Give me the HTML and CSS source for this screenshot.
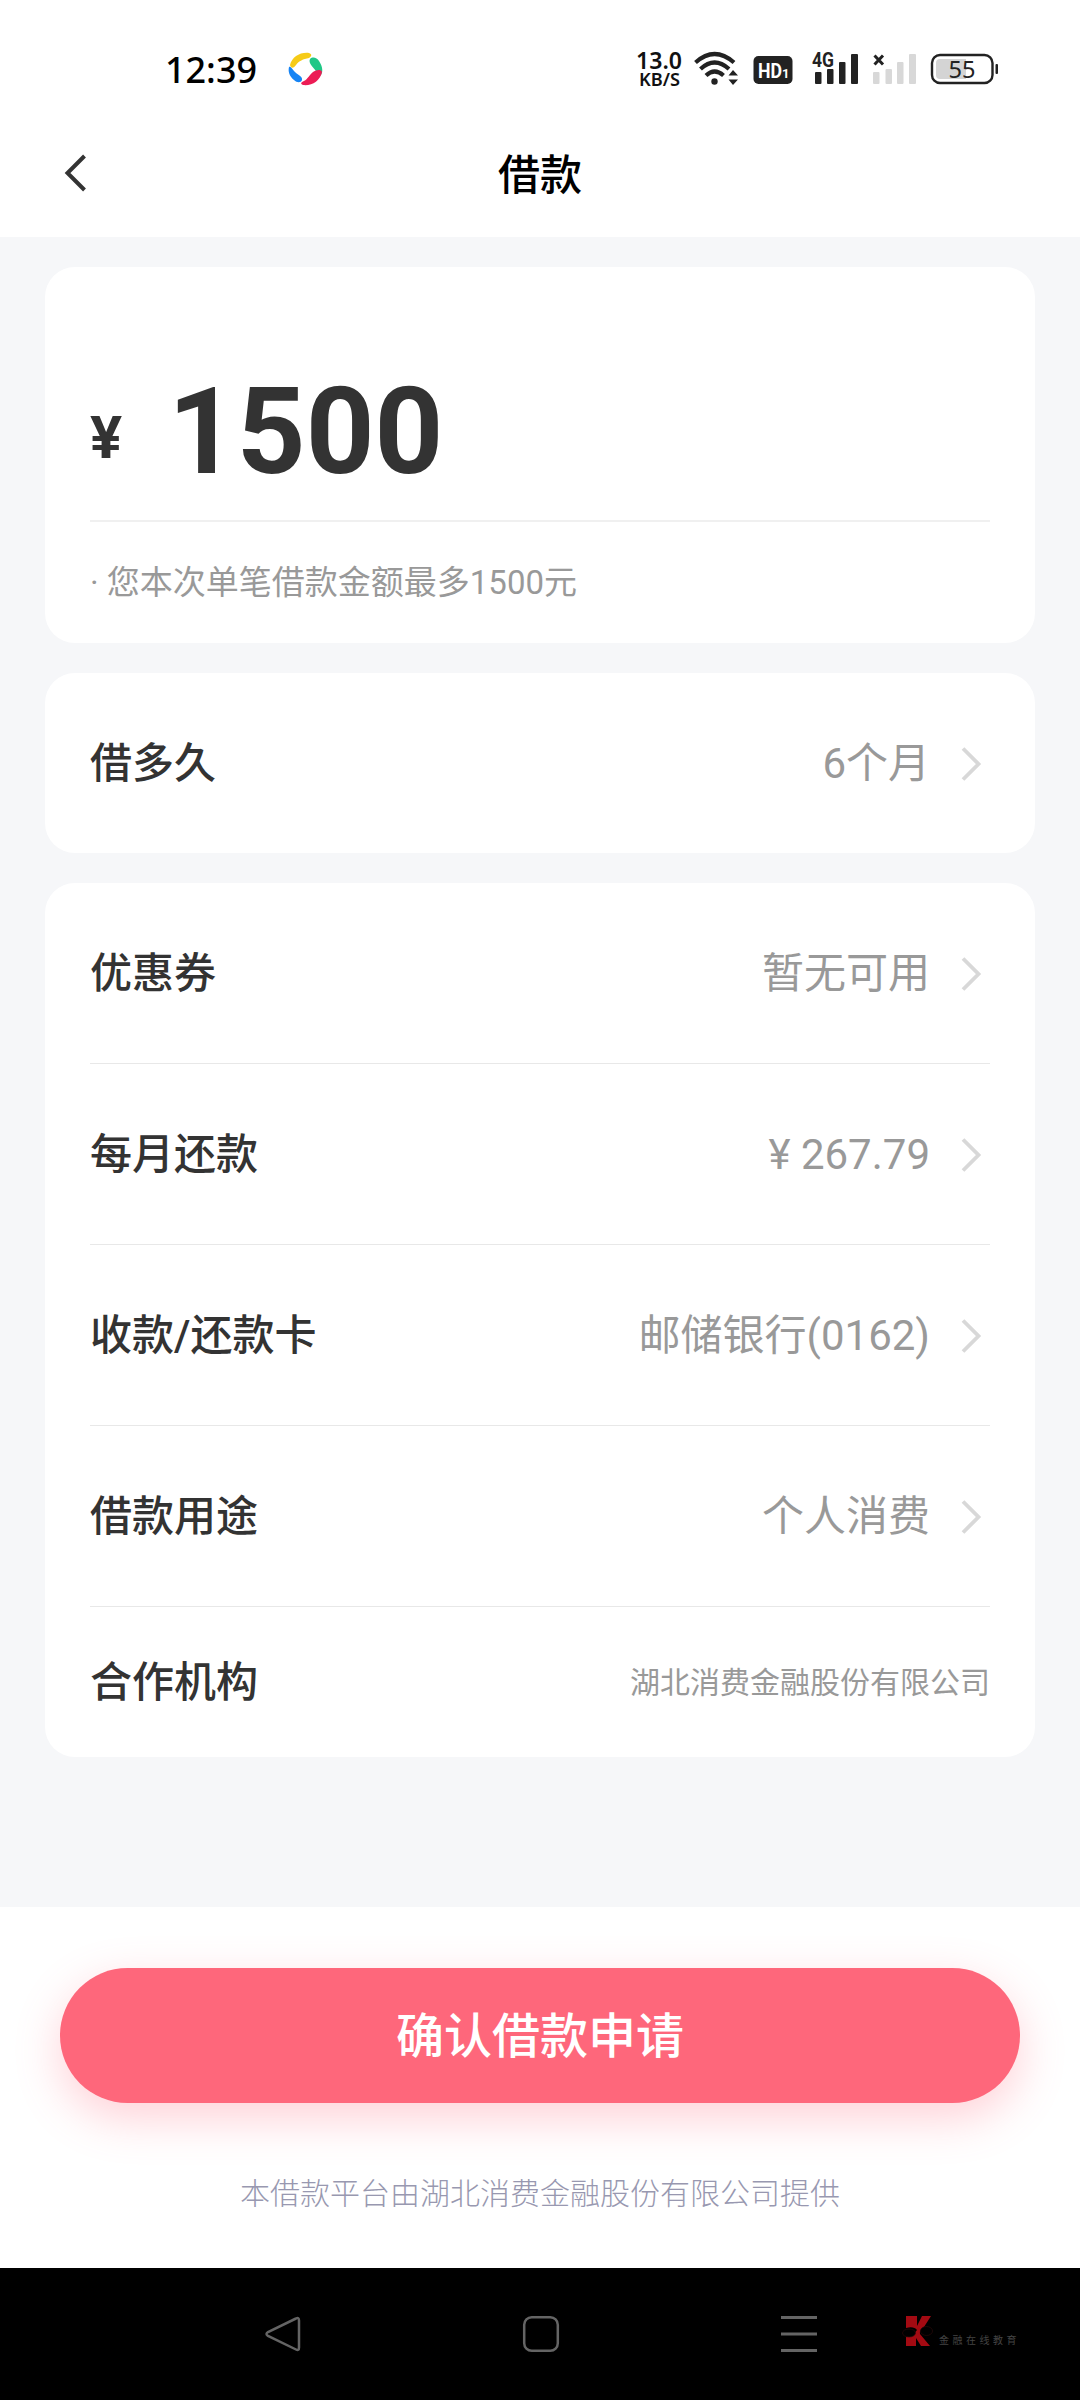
FILE: index.html
```html
<!DOCTYPE html>
<html lang="zh-CN">
<head>
<meta charset="utf-8">
<title>借款</title>
<link rel="stylesheet" href="styles.css">
</head>
<body>
<svg class="defs" width="0" height="0" aria-hidden="true">
  <symbol id="chevron" viewBox="0 0 22 36"><path d="M3 2.500l15.500 15.500L3 33.500" fill="none" stroke="#d8d8d8" stroke-width="3.800"/></symbol>
</svg>
<div class="screen">
  <header class="status">
    <div class="status-left">
      <svg class="clock" viewBox="0 0 100 60"><text x="3" y="43" textLength="92" lengthAdjust="spacingAndGlyphs">12:39</text></svg>
      <svg class="app-dot" viewBox="0 0 36 36">
        <path d="M2 14C4 6 12 1 21 2C24 3 24 5 21 7C15 8 11 10 8 14C6 17 3 18 2 14Z" fill="#f6cb17"/>
        <path d="M22 8C25 5 29 7 31 10C35 16 35 21 33 24C31 26 30 23 28 20C25 16 20 12 22 8Z" fill="#20c786"/>
        <path d="M34 21C32 30 24 35 15 34C12 33 13 31 16 30C20 28 21 24 25 21C28 19 33 18 34 21Z" fill="#ec1c55"/>
        <path d="M1 16C3 15 4 18 6 20C9 24 15 25 14 29C13 32 9 32 6 29C1 25 0 20 1 16Z" fill="#1684f4"/>
      </svg>
    </div>
    <svg class="status-icons" viewBox="0 0 380 60">
      <g fill="#111">
        <text x="16" y="29" class="speed" textLength="46" lengthAdjust="spacingAndGlyphs">13.0</text>
        <text x="19" y="46" class="unit" textLength="41" lengthAdjust="spacingAndGlyphs">KB/S</text>
      </g>
      <g fill="none" stroke="#222" stroke-width="4.200">
        <path d="M75.500 22.500Q94.500 5.500 114 22.500"/>
        <path d="M80.500 29Q94.500 16 109 29"/>
        <path d="M86 35.500Q94.500 27.500 103.500 35.500"/>
      </g>
      <circle cx="94.500" cy="41.500" r="3.200" fill="#222"/>
      <path d="M108.500 35.500l4.500-5.500 5 5.500zM108.500 39.500h9.500l-5 5.500z" fill="#222"/>
      <rect x="133.500" y="16" width="39" height="28" rx="5" fill="#222"/>
      <text x="138" y="37.500" class="hd" textLength="24" lengthAdjust="spacingAndGlyphs">HD</text>
      <text x="162" y="37.500" class="hd-sub">1</text>
      <g fill="#222">
        <rect x="195" y="32" width="6.500" height="12" rx="1"/>
        <rect x="207" y="29" width="6.500" height="15" rx="1"/>
        <rect x="219" y="22" width="6.500" height="22" rx="1"/>
        <rect x="231" y="14" width="7" height="30" rx="1"/>
      </g>
      <text x="192" y="27" class="net" textLength="22" lengthAdjust="spacingAndGlyphs">4G</text>
      <g fill="#d8d8d8">
        <rect x="253" y="32" width="6.500" height="12" rx="1"/>
        <rect x="265.500" y="29" width="6.500" height="15" rx="1"/>
        <rect x="277" y="22" width="6.500" height="22" rx="1"/>
        <rect x="289" y="14" width="7" height="30" rx="1"/>
      </g>
      <path d="M254.500 15.500l8.500 9M263 15.500l-8.500 9" stroke="#222" stroke-width="3"/>
      <path d="M320 19h26v20h-26q-4 0-4-4V23q0-4 4-4z" fill="#d4d4d4"/>
      <rect x="312" y="15" width="60.500" height="28" rx="8" fill="none" stroke="#222" stroke-width="2.400"/>
      <rect x="375.500" y="24" width="2.500" height="10" rx="1" fill="#222"/>
      <text x="328.500" y="37.500" class="battery" textLength="27" lengthAdjust="spacingAndGlyphs">55</text>
    </svg>
  </header>

  <nav class="title-bar">
    <svg class="back" viewBox="0 0 24 38"><path d="M21.500 2L4.500 19l17 17" fill="none" stroke="#333" stroke-width="4"/></svg>
    <h1>借款</h1>
    <span></span>
  </nav>

  <main class="content">
    <section class="card amount-card">
      <div class="amount"><span class="yen">¥</span><span class="sum">1500</span></div>
      <p class="note">· 您本次单笔借款金额最多1500元</p>
    </section>

    <section class="card">
      <div class="row"><span class="label">借多久</span><span class="value">6个月</span><svg class="chev"><use href="#chevron"/></svg></div>
    </section>

    <section class="card">
      <div class="row"><span class="label">优惠券</span><span class="value">暂无可用</span><svg class="chev"><use href="#chevron"/></svg></div>
      <div class="row"><span class="label">每月还款</span><span class="value">¥ 267.79</span><svg class="chev"><use href="#chevron"/></svg></div>
      <div class="row"><span class="label">收款/还款卡</span><span class="value">邮储银行(0162)</span><svg class="chev"><use href="#chevron"/></svg></div>
      <div class="row"><span class="label">借款用途</span><span class="value">个人消费</span><svg class="chev"><use href="#chevron"/></svg></div>
      <div class="row row-small"><span class="label">合作机构</span><span class="partner">湖北消费金融股份有限公司</span></div>
    </section>
  </main>

  <footer class="action">
    <button class="confirm">确认借款申请</button>
    <p class="provider">本借款平台由湖北消费金融股份有限公司提供</p>
  </footer>

  <div class="sys-nav">
    <svg viewBox="0 0 40 40"><path d="M33 4.500Q36 3 36 6.500V33.500Q36 37 33 35.500L5 22Q2 20 5 18Z" fill="none" stroke="#646464" stroke-width="2.500"/></svg>
    <svg viewBox="0 0 40 40"><rect x="3.200" y="3.200" width="33.600" height="33.600" rx="7.500" fill="none" stroke="#646464" stroke-width="2.500"/></svg>
    <svg viewBox="0 0 40 40"><path d="M2 3.500h36M2 20h36M2 36.500h36" fill="none" stroke="#646464" stroke-width="3"/></svg>
    <div class="watermark">
      <svg viewBox="0 0 32 34">
        <path d="M4 2H15V12L20 2H29L22 13Q17 16 18 20L28 32H19L14 24V32H4V23Q12 21 15 16Q12 12 4 14Z" fill="#a30a12"/>
        <g fill="#000" stroke="#2a0a0a" stroke-width=".7"><ellipse cx="7" cy="19" rx="6.500" ry="4"/><ellipse cx="24.500" cy="17" rx="6" ry="4.500"/></g>
      </svg>
      <span>金融在线教育</span>
    </div>
  </div>
</div>
</body>
</html>
```
FILE: styles.css
```css
* { box-sizing: border-box; }

body {
  margin: 0;
  background: #fff;
  font-family: Roboto, "Noto Sans CJK SC", sans-serif;
  color: #333;
}

h1, p { margin: 0; }

svg { display: block; flex: none; }

.defs { position: absolute; }

.screen {
  width: 1080px;
  height: 2400px;
  display: flex;
  flex-direction: column;
  overflow: hidden;
}

.status {
  height: 110px;
  display: flex;
  justify-content: space-between;
  align-items: flex-start;
  padding: 40px 80px 0 162px;
}

.status-left { display: flex; gap: 26px; }

.clock { width: 100px; height: 60px; }
.clock text { font: 500 36px "Noto Sans", sans-serif; fill: #000; }

.app-dot { width: 36px; height: 36px; margin-top: 11px; }

.status-icons { width: 380px; height: 60px; }
.speed { font: 600 23.500px "Noto Sans", sans-serif; }
.unit { font: 600 18px "Noto Sans", sans-serif; }
.hd { font: 700 20px Roboto, sans-serif; fill: #fff; }
.hd-sub { font: 700 13px Roboto, sans-serif; fill: #fff; }
.net { font: 700 20px Roboto, sans-serif; fill: #222; stroke: #fff; stroke-width: 2px; paint-order: stroke; }
.battery { font: 400 23px "Noto Sans", sans-serif; fill: #222; }

.title-bar {
  height: 127px;
  display: grid;
  grid-template-columns: 100px 1fr 100px;
  align-items: center;
  padding: 4px 64px 0;
}

.back { width: 24px; height: 38px; margin: -5px 0 0 -1px; }

.title-bar h1 {
  font-size: 42px;
  font-weight: 500;
  line-height: 60px;
  text-align: center;
  color: #000;
}

.content {
  height: 1670px;
  background: #f6f7f9;
  padding: 30px 45px 0;
  display: flex;
  flex-direction: column;
  gap: 30px;
}

.card { background: #fff; border-radius: 30px; padding: 0 45px; }

.amount-card { height: 375.500px; }

.amount {
  height: 255px;
  display: flex;
  align-items: baseline;
  padding-top: 95px;
  border-bottom: 2px solid #f0f0f0;
  font-weight: 700;
}

.yen { font-size: 60px; width: 78px; transform: translateY(-15px); }
.sum { font-size: 120px; line-height: 140px; }

.note { font-size: 33px; line-height: 48px; color: #999; padding-top: 37px; }

.row {
  height: 181px;
  display: flex;
  align-items: center;
  font-size: 42px;
  line-height: 60px;
  padding-top: 2px;
  border-bottom: 1px solid #e8e8e8;
}

.row:last-child { border-bottom: 0; height: 180px; }
.row.row-small { height: 150px; }

.label { flex: 1; font-weight: 500; }
.value { color: #999; }
.chev { width: 22px; height: 36px; margin: 0 8px 0 30px; }
.partner { font-size: 30px; color: #999; }

.action {
  height: 361px;
  padding: 61px 60px 0;
  display: flex;
  flex-direction: column;
  align-items: center;
}

.confirm {
  width: 960px;
  height: 135px;
  border: 0;
  border-radius: 68px;
  padding: 2px 0 0;
  background: #fe677b;
  color: #fff;
  font: 500 48px/70px Roboto, "Noto Sans CJK SC", sans-serif;
  box-shadow: 0 15px 45px rgba(254, 103, 123, .3);
}

.provider {
  margin-top: 69px;
  font-size: 30px;
  line-height: 44px;
  font-weight: 300;
  color: #9898b0;
}

.sys-nav {
  height: 132px;
  background: #000;
  display: flex;
  align-items: center;
  padding-left: 263px;
}

.sys-nav > svg { width: 40px; height: 40px; margin-right: 218px; }
.sys-nav > svg:nth-child(3) { margin-right: 83px; }

.watermark { display: flex; align-items: flex-end; gap: 5px; padding-bottom: 7px; }
.watermark svg { width: 32px; height: 34px; }
.watermark span {
  font-size: 10px;
  line-height: 14px;
  letter-spacing: 3.500px;
  color: #444;
}
```
